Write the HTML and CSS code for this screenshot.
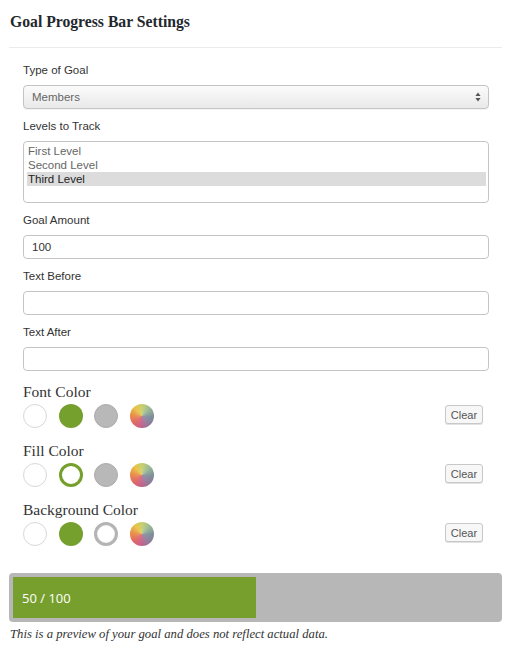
FILE: index.html
```html
<!DOCTYPE html>
<html>
<head>
<meta charset="utf-8">
<link rel="stylesheet" href="styles.css">
</head>
<body>
<div class="wrap">
  <h2 class="title">Goal Progress Bar Settings</h2>
  <div class="form">
    <div class="field">
      <label class="label">Type of Goal</label>
      <div class="select">
        <span>Members</span>
        <svg class="arrows" width="6" height="10" viewBox="0 0 6 10"><path d="M3 0.5 L5.6 4 H0.4 Z M3 9.5 L5.6 6 H0.4 Z" fill="#555"/></svg>
      </div>
    </div>
    <div class="field">
      <label class="label">Levels to Track</label>
      <div class="listbox">
        <div class="opt">First Level</div>
        <div class="opt">Second Level</div>
        <div class="opt sel">Third Level</div>
      </div>
    </div>
    <div class="field">
      <label class="label">Goal Amount</label>
      <div class="input">100</div>
    </div>
    <div class="field">
      <label class="label">Text Before</label>
      <div class="input"></div>
    </div>
    <div class="field">
      <label class="label">Text After</label>
      <div class="input"></div>
    </div>

    <div class="colors">
      <div class="color-group">
        <div class="color-title">Font Color</div>
        <div class="swatch-row">
          <div class="swatches">
            <span class="sw white"></span>
            <span class="sw green"></span>
            <span class="sw gray"></span>
            <span class="sw multi"></span>
          </div>
          <button class="clear">Clear</button>
        </div>
      </div>
      <div class="color-group">
        <div class="color-title">Fill Color</div>
        <div class="swatch-row">
          <div class="swatches">
            <span class="sw white"></span>
            <span class="sw green-ring"></span>
            <span class="sw gray"></span>
            <span class="sw multi"></span>
          </div>
          <button class="clear">Clear</button>
        </div>
      </div>
      <div class="color-group last">
        <div class="color-title">Background Color</div>
        <div class="swatch-row">
          <div class="swatches">
            <span class="sw white"></span>
            <span class="sw green"></span>
            <span class="sw gray-ring"></span>
            <span class="sw multi"></span>
          </div>
          <button class="clear">Clear</button>
        </div>
      </div>
    </div>
  </div>

  <div class="progress">
    <div class="fill" style="width: 243px;">50 / 100</div>
  </div>
  <p class="note">This is a preview of your goal and does not reflect actual data.</p>
</div>
</body>
</html>
```
FILE: styles.css
```css
html, body {
  margin: 0;
  padding: 0;
  background: #fff;
}
.wrap {
  padding: 0 8px 0 9px;
}
.title {
  margin: 0;
  padding: 13px 0 0 1px;
  box-sizing: border-box;
  font-family: "Liberation Serif", serif;
  font-weight: bold;
  font-size: 15.7px;
  line-height: 18px;
  color: #23282d;
  border-bottom: 1px solid #ebebeb;
  height: 48px;
}
.form {
  padding: 15px 13px 0 14px;
}
.field {
  display: flex;
  flex-direction: column;
  margin-bottom: 10px;
}
.label {
  font-family: "Liberation Sans", Arial, sans-serif;
  font-size: 11.5px;
  line-height: 15px;
  color: #333;
  margin-bottom: 7px;
}
.select {
  height: 24px;
  box-sizing: border-box;
  border: 1px solid #c4c4c4;
  border-radius: 4px;
  background: linear-gradient(#fbfbfb, #e9e9e9);
  display: flex;
  align-items: center;
  justify-content: space-between;
  padding: 0 7px 0 8px;
  font-family: "Liberation Sans", Arial, sans-serif;
  font-size: 11.5px;
  color: #666;
  box-shadow: 0 1px 1px rgba(0,0,0,0.05);
}
.listbox {
  height: 62px;
  box-sizing: border-box;
  border: 1px solid #c4c4c4;
  border-radius: 4px;
  padding: 2px 2px 0 3px;
  font-family: "Liberation Sans", Arial, sans-serif;
  font-size: 11.5px;
  line-height: 14px;
  color: #666;
}
.opt {
  padding-left: 1px;
}
.opt.sel {
  background: #dcdcdc;
  color: #222;
}
.input {
  height: 24px;
  box-sizing: border-box;
  border: 1px solid #c4c4c4;
  border-radius: 4px;
  background: #fff;
  padding: 0 8px;
  display: flex;
  align-items: center;
  font-family: "Liberation Sans", Arial, sans-serif;
  font-size: 11.5px;
  color: #333;
}
.colors {
  padding-top: 3px;
}
.color-group {
  margin-bottom: 15px;
}
.color-group.last {
  margin-bottom: 0;
}
.color-title {
  font-family: "Liberation Serif", serif;
  font-size: 15.5px;
  line-height: 16px;
  color: #333;
  margin-bottom: 4px;
}
.swatch-row {
  display: flex;
  align-items: center;
  justify-content: space-between;
  padding-right: 6px;
}
.swatches {
  display: flex;
  gap: 11.7px;
}
.sw {
  width: 24px;
  height: 24px;
  box-sizing: border-box;
  border-radius: 50%;
  display: block;
}
.sw.white {
  background: #fff;
  border: 1px solid #d8d8d8;
}
.sw.green {
  background: #76a02d;
}
.sw.gray {
  background: #b8b8b8;
  border: 1px solid #acacac;
}
.sw.green-ring {
  background: #fff;
  border: 3px solid #76a02d;
}
.sw.gray-ring {
  background: #fff;
  border: 3px solid #b4b4b4;
  box-shadow: inset 0 0 1px rgba(0,0,0,0.25);
}
.sw.multi {
  background:
    radial-gradient(circle, rgba(255,255,255,0.15), rgba(255,255,255,0) 70%),
    conic-gradient(from 0deg, #c6cf6c, #98b895 45deg, #7b8b98 95deg, #8c7a98 140deg, #c45e8a 185deg, #e2655e 230deg, #e98c45 275deg, #e9c243 320deg, #c6cf6c);
}
.clear {
  width: 38px;
  height: 19px;
  padding: 0;
  margin-top: -3px;
  border: 1px solid #c8c8c8;
  border-radius: 3px;
  background: #f7f7f7;
  font-family: "Liberation Sans", Arial, sans-serif;
  font-size: 11px;
  color: #555;
  box-shadow: 0 1px 0 #e2e2e2;
}
.progress {
  margin-top: 27px;
  height: 49px;
  box-sizing: border-box;
  background: #b7b7b7;
  border-radius: 4px;
  padding: 4px;
  display: flex;
}
.fill {
  background: #779f2d;
  color: #fff;
  font-family: "Open Sans", sans-serif;
  font-size: 13px;
  display: flex;
  align-items: center;
  padding-left: 9px;
  box-sizing: border-box;
}
.note {
  margin: 4px 0 0 1px;
  font-family: "Liberation Serif", serif;
  font-style: italic;
  font-size: 12.7px;
  line-height: 16px;
  color: #333;
}
```
